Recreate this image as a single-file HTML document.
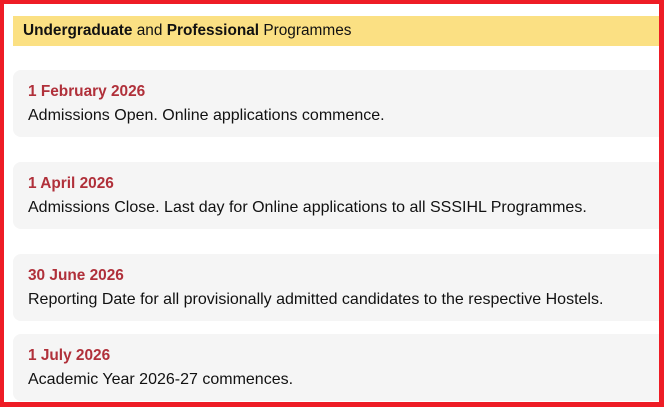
<!DOCTYPE html>
<html><head><style>
body{margin:0;width:664px;height:407px;overflow:hidden;background:#fff;font-family:"Liberation Sans",Arial,sans-serif;position:relative}
.frame{position:absolute;left:0;top:0;width:664px;height:407px;box-sizing:border-box;border:4px solid #ee1c25;border-right-width:5px;border-bottom-width:5px;z-index:5;pointer-events:none}
.hdr{position:absolute;left:13px;top:16px;width:650px;height:30px;background:#fbe083;font-size:15.4px;line-height:30px;padding-left:10px;box-sizing:border-box;color:#111}
.card{position:absolute;left:13px;width:660px;height:67px;background:#f5f5f5;border-radius:8px}
.d{position:absolute;left:15px;top:13px;font-size:15.4px;font-weight:bold;color:#b0303a}
.t{position:absolute;left:15px;top:37px;font-size:16px;color:#111}
</style></head><body>
<div class="frame"></div>
<div class="hdr"><b>Undergraduate</b> and <b>Professional</b> Programmes</div>
<div class="card" style="top:70px"><div class="d">1 February 2026</div><div class="t">Admissions Open. Online applications commence.</div></div>
<div class="card" style="top:162px"><div class="d">1 April 2026</div><div class="t">Admissions Close. Last day for Online applications to all SSSIHL Programmes.</div></div>
<div class="card" style="top:254px"><div class="d">30 June 2026</div><div class="t">Reporting Date for all provisionally admitted candidates to the respective Hostels.</div></div>
<div class="card" style="top:334px"><div class="d">1 July 2026</div><div class="t">Academic Year 2026-27 commences.</div></div>
</body></html>
